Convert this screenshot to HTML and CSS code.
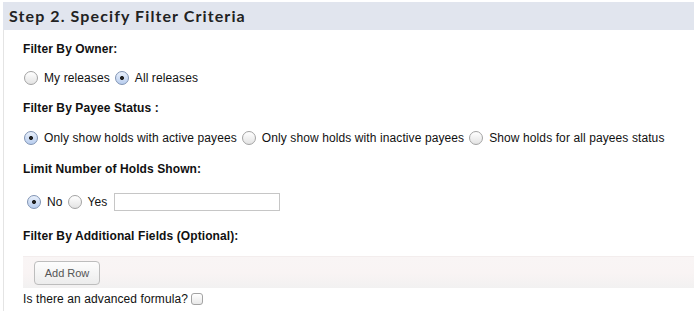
FILE: index.html
```html
<!DOCTYPE html>
<html>
<head>
<meta charset="utf-8">
<link rel="stylesheet" href="styles.css">
</head>
<body>
<div class="panel">
  <div class="step-head">Step 2. Specify Filter Criteria</div>
  <div class="step-body">
    <div class="label l1">Filter By Owner:</div>
    <div class="opts o1">
      <label class="opt"><input type="radio" name="owner"><span>My releases</span></label>
      <label class="opt"><input type="radio" name="owner" checked><span>All releases</span></label>
    </div>
    <div class="label l2">Filter By Payee Status :</div>
    <div class="opts o2">
      <label class="opt"><input type="radio" name="payee" checked><span>Only show holds with active payees</span></label>
      <label class="opt"><input type="radio" name="payee"><span>Only show holds with inactive payees</span></label>
      <label class="opt"><input type="radio" name="payee"><span>Show holds for all payees status</span></label>
    </div>
    <div class="label l3">Limit Number of Holds Shown:</div>
    <div class="opts o3">
      <label class="opt"><input type="radio" name="limit" checked><span>No</span></label>
      <label class="opt"><input type="radio" name="limit"><span>Yes</span></label>
      <input type="text" class="txt">
    </div>
    <div class="label l4">Filter By Additional Fields (Optional):</div>
    <div class="rowbar"><button class="btn">Add Row</button></div>
    <label class="formula">Is there an advanced formula? <input type="checkbox" class="chk"></label>
  </div>
</div>
</body>
</html>
```
FILE: styles.css
```css
html, body { margin: 0; padding: 0; background: #fff; }
body { font-family: "Liberation Sans", Arial, Helvetica, sans-serif; font-size: 12px; color: #111; }
.panel { margin: 2px 0 0 3px; }
.step-head {
  height: 28px;
  background: #e1e5ee;
  font-family: Lato, "Open Sans", sans-serif;
  font-weight: 700;
  font-size: 16px;
  letter-spacing: 1.1px;
  color: #222;
  line-height: 28px;
  padding-left: 6px;
}
.step-body {
  border-left: 1px solid #e4e4e4;
  padding-left: 19px;
  padding-bottom: 10px;
}
.label { font-weight: 700; line-height: 16px; height: 16px; letter-spacing: 0.1px; }
.l1 { padding-top: 11px; }
.l2 { margin-top: 13px; }
.l3 { margin-top: 14px; }
.l4 { margin-top: 17px; }
.opts { display: flex; align-items: center; height: 18px; letter-spacing: 0.1px; }
.o1 { margin-top: 12px; }
.o2 { margin-top: 13px; }
.o3 { margin-top: 16px; }
.o3 .opt:first-child input { margin-left: 4px; }
.opt { display: flex; align-items: center; margin-right: 4px; }
.opt span { margin-left: 6px; }
.opt input {
  -webkit-appearance: none; appearance: none;
  width: 14px; height: 14px; margin: 0 0 0 1px;
  border: 1px solid #a3a3a3; border-radius: 50%;
  background: linear-gradient(#ffffff, #e3e3e3);
  box-sizing: border-box; position: relative;
}
.opt input:checked {
  border-color: #7f93b3;
  background: radial-gradient(circle, #222 0 1.7px, transparent 2.3px), linear-gradient(#e9f0fb, #b8cdee);
}
.txt {
  width: 166px; height: 18px; box-sizing: border-box;
  border: 1px solid #c6c6c6; margin: 0 0 0 3px; padding: 0 3px;
  font: inherit;
}
.rowbar {
  margin-top: 12px;
  height: 32px;
  box-sizing: border-box;
  border-top: 1px solid #f3eded;
  background: linear-gradient(#f9f5f5, #f9f4f4 50%, #f2f1f1);
  display: flex; align-items: center;
  padding-left: 11px;
}
.btn {
  width: 66px; height: 24px;
  border: 1px solid #bdbdbd; border-radius: 4px;
  background: linear-gradient(#fdfdfd, #ececec);
  font-family: "Liberation Sans", Arial, sans-serif;
  font-size: 11px; color: #555;
  padding: 0; margin-top: 1px;
}
.formula { display: flex; align-items: center; height: 16px; margin-top: 3px; letter-spacing: 0.1px; }
.chk {
  -webkit-appearance: none; appearance: none;
  width: 12px; height: 12px; margin: 0 0 0 3px;
  border: 1px solid #a3a3a3; border-radius: 3px;
  background: linear-gradient(#fff, #e8e8e8);
  box-sizing: border-box;
}
```
